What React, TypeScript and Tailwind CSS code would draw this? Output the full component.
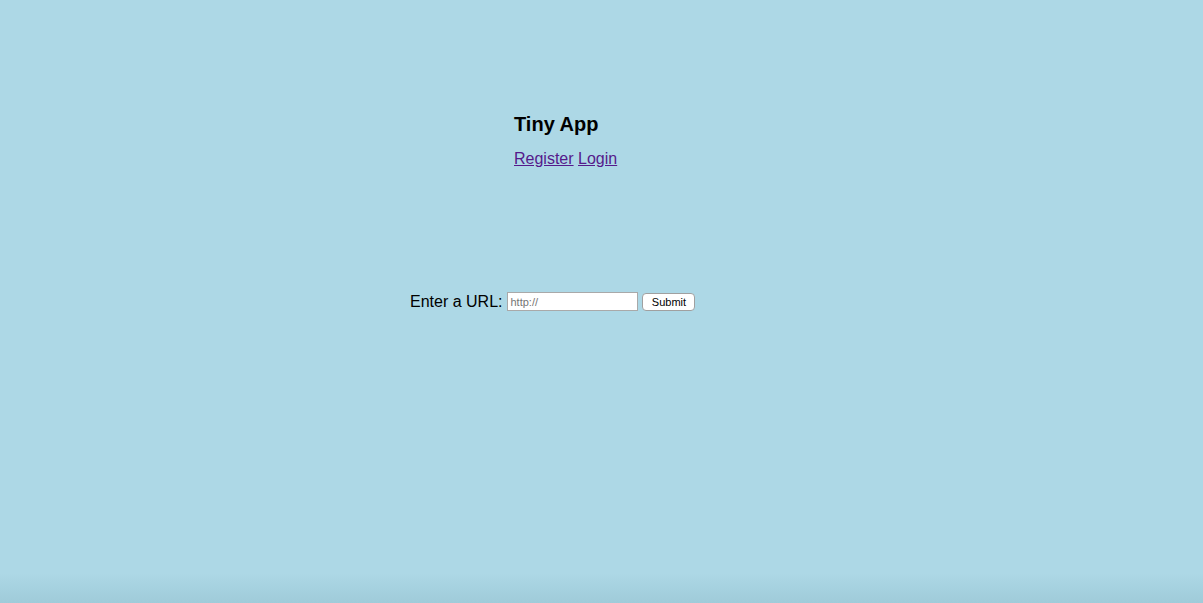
import React from "react";

export default function App() {
  return (
    <div
      className="relative h-[603px] w-full overflow-hidden bg-[#add8e6] text-black"
      style={{ fontFamily: '"Liberation Sans", Arial, sans-serif' }}
    >
      <header className="ml-[514px] pt-[113px]">
        <h1 className="text-[20px] font-bold leading-[23px]">Tiny App</h1>
        <nav className="mt-[14px] text-[16px] leading-[18px]">
          <a href="#" className="text-[#551a8b] underline">Register</a>{" "}
          <a href="#" className="text-[#551a8b] underline">Login</a>
        </nav>
      </header>
      <main className="ml-[410px] mt-[124px] flex items-center">
        <span className="text-[16px] leading-[18px]">Enter a URL:</span>
        <input
          type="text"
          placeholder="http://"
          className="ml-[5px] h-[19px] w-[131px] border border-[#a9a9a9] bg-white px-[2px] text-[11px] leading-[15px] placeholder:text-[#757575] outline-none"
        />
        <button className="ml-[4px] h-[18px] w-[53px] rounded-[4px] border border-[#a0a0a0] bg-white text-[11px] leading-[14px] text-black">
          Submit
        </button>
      </main>
      <div className="pointer-events-none absolute bottom-0 left-0 h-[30px] w-full bg-gradient-to-b from-transparent to-[#9fcbd9]" />
    </div>
  );
}
